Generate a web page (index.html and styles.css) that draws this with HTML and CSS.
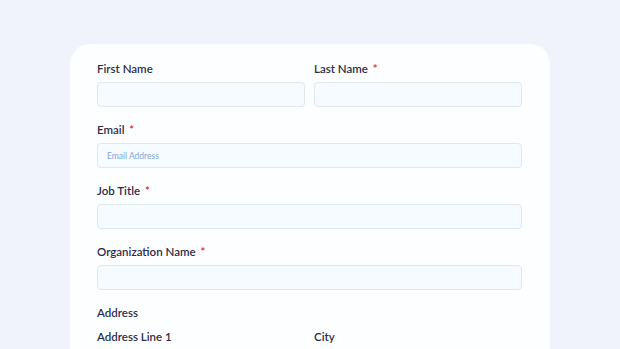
FILE: index.html
```html
<!DOCTYPE html>
<html lang="en">
<head>
  <meta charset="UTF-8">
  <meta name="viewport" content="width=device-width, initial-scale=1.0">
  <title>Contact Form</title>
  <link rel="stylesheet" href="styles.css">
</head>
<body>
  <div class="page">
    <form class="form-card">
      <div class="form-row">
        <div class="field">
          <label class="field-label">First Name</label>
          <input type="text" class="field-input">
        </div>
        <div class="field">
          <label class="field-label">Last Name <span class="req">*</span></label>
          <input type="text" class="field-input">
        </div>
      </div>

      <div class="field">
        <label class="field-label">Email <span class="req">*</span></label>
        <input type="email" class="field-input" placeholder="Email Address">
      </div>

      <div class="field">
        <label class="field-label">Job Title <span class="req">*</span></label>
        <input type="text" class="field-input">
      </div>

      <div class="field">
        <label class="field-label">Organization Name <span class="req">*</span></label>
        <input type="text" class="field-input">
      </div>

      <div class="section-title">Address</div>

      <div class="form-row">
        <div class="field">
          <label class="field-label">Address Line 1</label>
          <input type="text" class="field-input">
        </div>
        <div class="field">
          <label class="field-label">City</label>
          <input type="text" class="field-input">
        </div>
      </div>
    </form>
  </div>
</body>
</html>
```

FILE: styles.css
```css
:root {
  --bg-page: #f0f3fb;
  --bg-card: #fdfeff;
  --bg-input: #f5fbff;
  --border-input: #dfe7ef;
  --text-label: #2e2e48;
  --text-placeholder: #86a6d6;
  --required: #e0203a;
}

* {
  margin: 0;
  padding: 0;
  box-sizing: border-box;
  font-family: "Lato", "Noto Sans", sans-serif;
}

body {
  background: var(--bg-page);
  height: 349px;
  overflow: hidden;
}

.page {
  padding: 44px 70px 0;
}

.form-card {
  background: var(--bg-card);
  border-radius: 20px;
  padding: 18px 28px 40px 27px;
  display: flex;
  flex-direction: column;
  gap: 16px;
}

.form-row {
  display: flex;
  gap: 9px;
}

.form-row .field {
  flex: 1;
}

.field {
  display: flex;
  flex-direction: column;
  gap: 7px;
}

.field-label {
  font-size: 11.5px;
  line-height: 13px;
  font-weight: 600;
  color: var(--text-label);
}

.req {
  color: var(--required);
  margin-left: 2px;
}

.field-input {
  height: 25px;
  background: var(--bg-input);
  border: 1px solid var(--border-input);
  border-radius: 4px;
  padding: 0 9px;
  font-size: 8.5px;
  color: var(--text-label);
}

.field-input::placeholder {
  color: var(--text-placeholder);
}

.section-title {
  font-size: 11.5px;
  line-height: 13px;
  font-weight: 600;
  color: var(--text-label);
  margin-bottom: -5px;
}
```
